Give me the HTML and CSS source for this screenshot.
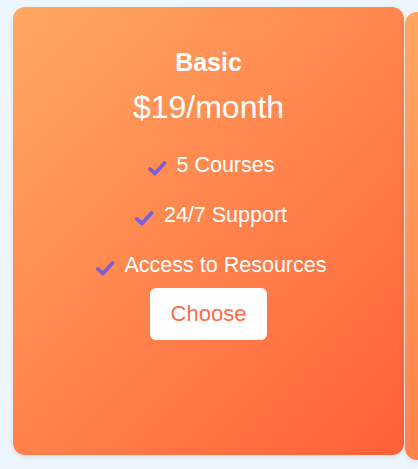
FILE: index.html
```html
<!DOCTYPE html>
<html>
<head>
<meta charset="utf-8">
<link rel="stylesheet" href="styles.css">
</head>
<body>
<div class="plans">
  <div class="card card-active">
    <h3 class="plan-name">Basic</h3>
    <p class="price">$19/month</p>
    <ul class="features">
      <li><svg class="check" viewBox="0 0 20 16"><path d="M3 9 L8 13.5 L17.5 3" fill="none" stroke="#7b5fd6" stroke-width="3.8" stroke-linecap="round" stroke-linejoin="round"/></svg>5 Courses</li>
      <li><svg class="check" viewBox="0 0 20 16"><path d="M3 9 L8 13.5 L17.5 3" fill="none" stroke="#7b5fd6" stroke-width="3.8" stroke-linecap="round" stroke-linejoin="round"/></svg>24/7 Support</li>
      <li><svg class="check" viewBox="0 0 20 16"><path d="M3 9 L8 13.5 L17.5 3" fill="none" stroke="#7b5fd6" stroke-width="3.8" stroke-linecap="round" stroke-linejoin="round"/></svg>Access to Resources</li>
    </ul>
    <button class="choose">Choose</button>
  </div>
  <div class="card card-next"></div>
</div>
</body>
</html>
```

FILE: styles.css
```css
html, body {
  margin: 0;
  padding: 0;
  background: #eef6fd;
  font-family: "Liberation Sans", Arial, sans-serif;
  overflow: hidden;
}

.plans {
  display: flex;
  align-items: flex-start;
  gap: 1px;
  padding: 7px 0 0 13px;
  height: 469px;
  box-sizing: border-box;
  overflow: hidden;
}

.card {
  flex: 0 0 391px;
  height: 448px;
  box-sizing: border-box;
  border-radius: 12px;
  background: linear-gradient(135deg, #ffa862 0%, #ff6038 100%);
  box-shadow: 0 2px 6px rgba(0, 0, 0, 0.08);
  color: #fff;
  text-align: center;
  padding-top: 41px;
}

.card-next {
  margin-top: 5px;
}

.plan-name {
  margin: 0;
  font-size: 25px;
  font-weight: bold;
  line-height: 28px;
}

.price {
  margin: 13px 0 0;
  font-size: 32px;
  line-height: 36px;
}

.features {
  list-style: none;
  margin: 28px 0 0;
  padding: 0 0 0 4px;
}

.features li {
  font-size: 21.5px;
  line-height: 24px;
  margin-bottom: 26px;
}

.features li:last-child {
  margin-bottom: 0;
}

.check {
  width: 20px;
  height: 16px;
  vertical-align: -4px;
  margin-right: 10px;
}

.choose {
  margin-top: 11px;
  background: #fff;
  color: #ff6a45;
  border: none;
  border-radius: 6px;
  font-family: "Liberation Sans", Arial, sans-serif;
  font-size: 22px;
  line-height: 24px;
  padding: 14px 20.5px;
  cursor: pointer;
}
```
